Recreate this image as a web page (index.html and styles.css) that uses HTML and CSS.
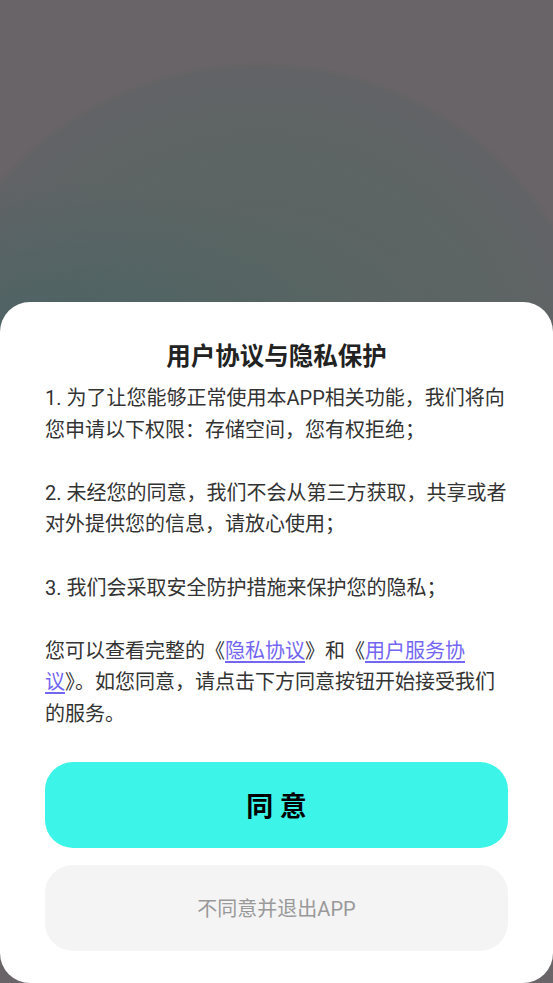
FILE: index.html
```html
<!DOCTYPE html>
<html lang="zh-CN">
<head>
<meta charset="utf-8">
<title>用户协议与隐私保护</title>
<link rel="stylesheet" href="styles.css">
</head>
<body>
<div class="screen">
  <div class="backdrop"></div>
  <div class="sheet">
    <h1 class="title">用户协议与隐私保护</h1>
    <div class="content">
      <p>1. 为了让您能够正常使用本APP相关功能，我们将向您申请以下权限：存储空间，您有权拒绝；</p>
      <p>2. 未经您的同意，我们不会从第三方获取，共享或者对外提供您的信息，请放心使用；</p>
      <p>3. 我们会采取安全防护措施来保护您的隐私；</p>
      <p>您可以查看完整的《<a class="link" href="#">隐私协议</a>》和《<a class="link" href="#">用户服务协议</a>》。如您同意，请点击下方同意按钮开始接受我们的服务。</p>
    </div>
    <button class="btn btn-agree">同 意</button>
    <button class="btn btn-decline">不同意并退出APP</button>
  </div>
</div>
</body>
</html>
```
FILE: styles.css
```css
html, body {
  margin: 0;
  padding: 0;
}
body {
  width: 553px;
  height: 983px;
  overflow: hidden;
  font-family: Roboto, "Noto Sans CJK SC", sans-serif;
  background: #5a6462;
}
.screen {
  display: flex;
  flex-direction: column;
  height: 983px;
  background:
    radial-gradient(ellipse 330px 150px at 40px 330px, rgba(68, 98, 100, 0.6) 0%, rgba(68, 98, 100, 0) 100%),
    radial-gradient(ellipse 345px 338px at 260px 400px, #566462 0%, #5a6563 45%, #5f6465 85%, #626366 98%, rgba(104, 100, 103, 0) 100%),
    #686467;
}
.backdrop {
  height: 302px;
  flex: none;
}
.sheet {
  flex: 1;
  background: #fff;
  border-radius: 30px;
  padding: 38px 45px 0;
  display: flex;
  flex-direction: column;
}
.title {
  margin: 0;
  font-size: 24.5px;
  line-height: 34px;
  font-weight: 700;
  color: #222;
  text-align: center;
}
.content {
  margin-top: 9px;
  font-size: 20px;
  line-height: 31.6px;
  color: #333;
}
.content p {
  margin: 0 0 31.6px;
}
.content p:last-child {
  margin-bottom: 0;
}
.link {
  color: #7366f2;
  text-decoration: underline;
  text-underline-offset: 3px;
}
.btn {
  display: block;
  width: 100%;
  height: 86px;
  border: none;
  border-radius: 28px;
  font-family: Roboto, "Noto Sans CJK SC", sans-serif;
  cursor: pointer;
}
.btn-agree {
  margin-top: 31px;
  background: #3cf5e8;
  color: #000;
  font-size: 27px;
  font-weight: 700;
}
.btn-decline {
  margin-top: 17px;
  background: #f4f4f4;
  color: #999;
  font-size: 20px;
}
```
